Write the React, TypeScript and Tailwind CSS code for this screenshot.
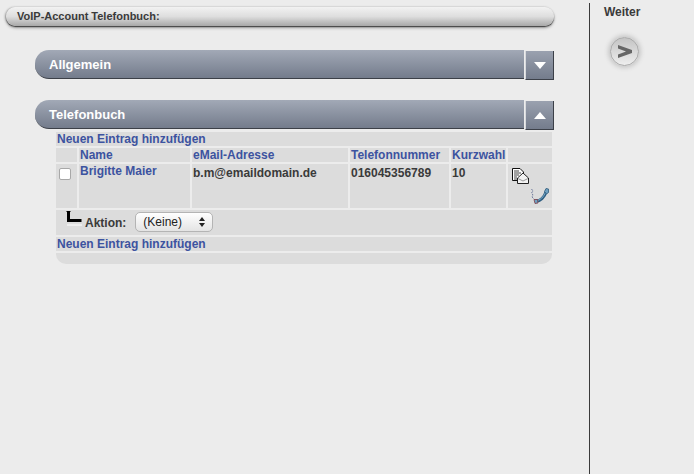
function Chevron({ up }: { up?: boolean }) {
  return (
    <svg width="12" height="7" viewBox="0 0 12 7" className="block">
      <path d={up ? "M6 0 12 7H0Z" : "M0 0H12L6 7Z"} fill="#fff" />
    </svg>
  )
}

function SectionBar({ title, up }: { title: string; up?: boolean }) {
  return (
    <div className="flex h-[30px] items-start">
      <div className="flex h-[29px] w-[489px] items-center rounded-l-[14px] border-b border-b-[#3c4048] bg-gradient-to-b from-[#a2a9b6] to-[#747c8c] pt-[2px] pl-[14px] text-[13px] font-bold text-white">
        {title}
      </div>
      <div className="mt-px ml-px flex h-[29px] w-[29px] items-center justify-center border-r border-b border-l border-r-[#3c4048] border-b-[#3c4048] border-l-[#d8dade] bg-gradient-to-b from-[#9aa1af] to-[#747c8c]">
        <Chevron up={up} />
      </div>
    </div>
  )
}

function LinkRow() {
  return <div className="flex h-[14px] items-center bg-[#dcdcdc] pl-px font-bold text-[#3c53a0]">Neuen Eintrag hinzufügen</div>
}

function HeadCell({ children }: { children?: string }) {
  return <div className="flex h-[14px] items-center bg-[#dcdcdc] pl-px font-bold text-[#3c53a0]">{children}</div>
}

function DataCell({ children }: { children: string }) {
  return <div className="bg-[#dcdcdc] pt-px pl-px font-bold leading-[16px] text-[#3a3a3a]">{children}</div>
}

function DocIcon() {
  return (
    <svg width="17" height="17" viewBox="0 0 17 17" className="block">
      <path d="M.5.5H8L11.500 4V12.500H.5Z" fill="#fff" stroke="#111" />
      <path d="M2 3H7M2 5H9M2 7H7M2 9H5M2 11H5" stroke="#444" />
      <path d="M5.500 10 11 5 16.500 10V15.500H5.500Z" fill="#f2f2f2" stroke="#222" />
      <path d="M6 10.500 11 13 16 10.500" fill="none" stroke="#999" />
    </svg>
  )
}

function PhoneIcon() {
  return (
    <svg width="20" height="17" viewBox="0 0 20 17" className="block">
      <path d="M1.500 1 3 3 1.500 5 3 7 2 9 4 11" fill="none" stroke="#6f7a9c" strokeWidth="1" strokeDasharray="2 1" />
      <path d="M6 13C10 13.500 14.500 9 16 4" fill="none" stroke="#2f5f82" strokeWidth="3" />
      <path d="M6.500 12.500C10 12.500 13.500 9 15.500 4.500" fill="none" stroke="#7fb0d0" strokeWidth="1" />
      <path d="M4 11.500 7.500 11.500 8 15 5 15.500Z" fill="#6fa0c0" stroke="#7a3d4a" strokeWidth=".8" />
      <path d="M14.500 3.500 16 .5 18.500 1 18.500 4.500 16.500 6Z" fill="#6fa0c0" stroke="#2f5a7a" strokeWidth=".8" />
    </svg>
  )
}

export default function App() {
  return (
    <div className="flex h-screen overflow-hidden bg-[#ececec] font-['Liberation_Sans',Arial,sans-serif] text-[12px] text-[#3a3a3a]">
      <main className="w-[589px] shrink-0 pt-[7px] pl-[6px]">
        <div className="flex h-[19px] w-[548px] items-center rounded-[10px] bg-gradient-to-b from-[#f2f2f2] via-[#dedede] to-[#a8a8a8] pl-[11px] text-[11px] font-bold leading-none text-[#3a3a3a] shadow-[0_1px_1px_#444,0_2px_3px_#999,-1px_0_2px_#aaa]">
          VoIP-Account Telefonbuch:
        </div>

        <div className="mt-[24px] ml-[29px]">
          <SectionBar title="Allgemein" />
        </div>
        <div className="mt-[20px] ml-[29px]">
          <SectionBar title="Telefonbuch" up />
        </div>

        <div className="mt-[2px] ml-[50px] flex w-[496px] flex-col gap-[2px] leading-none">
          <LinkRow />
          <div className="grid grid-cols-[21px_111px_156px_99px_55px_44px] gap-x-[2px] gap-y-[2px]">
            <HeadCell />
            <HeadCell>Name</HeadCell>
            <HeadCell>eMail-Adresse</HeadCell>
            <HeadCell>Telefonnummer</HeadCell>
            <HeadCell>Kurzwahl</HeadCell>
            <HeadCell />

            <div className="h-[44px] bg-[#dcdcdc] pt-[4px] pl-[3px]">
              <div className="h-[12px] w-[12px] rounded-[2px] border border-[#a8a8a8] bg-white" />
            </div>
            <div className="bg-[#dcdcdc] pl-px font-bold leading-[14px] text-[#3c53a0]">Brigitte Maier</div>
            <DataCell>b.m@emaildomain.de</DataCell>
            <DataCell>016045356789</DataCell>
            <DataCell>10</DataCell>
            <div className="flex flex-col bg-[#dcdcdc] pt-[4px] pl-[4px]">
              <DocIcon />
              <div className="mt-[3px] ml-[18px]">
                <PhoneIcon />
              </div>
            </div>
          </div>

          <div className="flex h-[25px] items-start bg-[#dcdcdc]">
            <svg width="16" height="15" viewBox="0 0 16 15" className="mt-px ml-[10px] block shrink-0">
              <path d="M1 0H4V8H15.500V11H1Z" fill="#000" />
              <path d="M0 0H5" stroke="#000" />
              <path d="M1 14H16" stroke="#fff" />
            </svg>
            <span className="mt-[7px] ml-[3px] font-bold">Aktion:</span>
            <div className="mt-[2px] ml-[9px] flex h-[20px] w-[78px] items-center justify-between rounded-[5px] border border-[#b4b4b4] bg-gradient-to-b from-white to-[#e4e4e4] pr-[7px] pl-[7px] text-[12px] text-[#222]">
              <span>(Keine)</span>
              <svg width="6" height="10" viewBox="0 0 6 10" className="block">
                <path d="M3 0 6 4H0ZM0 6H6L3 10Z" fill="#222" />
              </svg>
            </div>
          </div>

          <LinkRow />
          <div className="h-[11px] rounded-b-[10px] bg-[#dcdcdc]" />
        </div>
      </main>

      <aside className="mt-[3px] flex-1 border-l border-l-[#3a3a3a] pt-[2px] pl-[14px]">
        <div className="text-[12px] font-bold leading-[14px] text-[#3a3a3a]">Weiter</div>
        <div className="mt-[18px] ml-[6px] flex h-[29px] w-[29px] items-center justify-center rounded-full border border-[#a8a8a8] bg-gradient-to-b from-[#c4c4c4] to-[#eeeeee] shadow-[0_0_4px_2px_#c8c8c8]">
          <svg width="15" height="13" viewBox="0 0 15 13" className="block">
            <path d="M1 0 15 5V8L1 13V9.500L9 6.500 1 3.500Z" fill="#666" />
          </svg>
        </div>
      </aside>
    </div>
  )
}
